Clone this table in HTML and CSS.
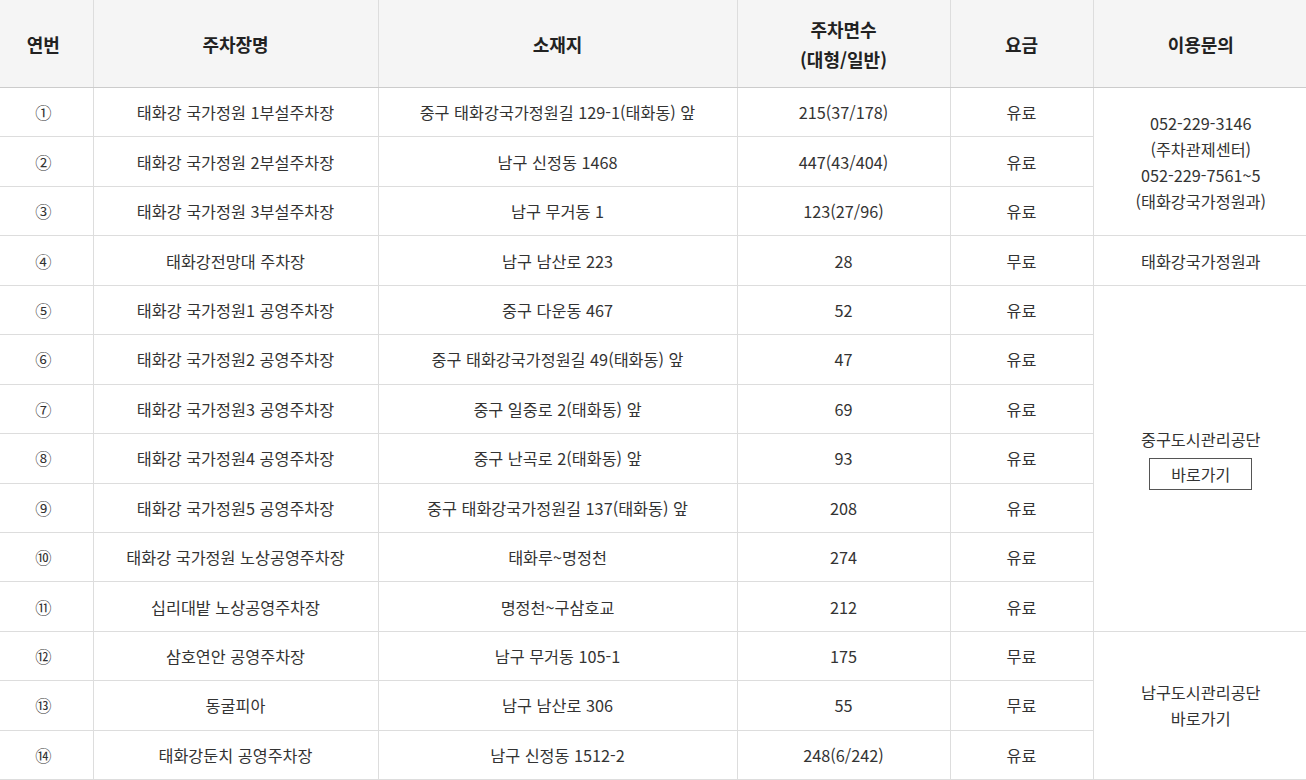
FILE: index.html
```html
<!DOCTYPE html>
<html lang="ko">
<head>
<meta charset="utf-8">
<title>태화강 국가정원 주차장</title>
<link rel="stylesheet" href="styles.css">
</head>
<body>
<div class="wrap">
<table class="park">
  <colgroup>
    <col class="c1"><col class="c2"><col class="c3"><col class="c4"><col class="c5"><col class="c6">
  </colgroup>
  <thead>
    <tr>
      <th>연번</th>
      <th>주차장명</th>
      <th>소재지</th>
      <th>주차면수<br>(대형/일반)</th>
      <th>요금</th>
      <th>이용문의</th>
    </tr>
  </thead>
  <tbody>
    <tr>
      <td>①</td><td>태화강 국가정원 1부설주차장</td><td>중구 태화강국가정원길 129-1(태화동) 앞</td><td>215(37/178)</td><td>유료</td>
      <td rowspan="3" class="info">052-229-3146<br>(주차관제센터)<br>052-229-7561~5<br>(태화강국가정원과)</td>
    </tr>
    <tr>
      <td>②</td><td>태화강 국가정원 2부설주차장</td><td>남구 신정동 1468</td><td>447(43/404)</td><td>유료</td>
    </tr>
    <tr>
      <td>③</td><td>태화강 국가정원 3부설주차장</td><td>남구 무거동 1</td><td>123(27/96)</td><td>유료</td>
    </tr>
    <tr>
      <td>④</td><td>태화강전망대 주차장</td><td>남구 남산로 223</td><td>28</td><td>무료</td>
      <td>태화강국가정원과</td>
    </tr>
    <tr>
      <td>⑤</td><td>태화강 국가정원1 공영주차장</td><td>중구 다운동 467</td><td>52</td><td>유료</td>
      <td rowspan="7" class="info">
        <div>중구도시관리공단</div>
        <a class="btn" href="#">바로가기</a>
      </td>
    </tr>
    <tr>
      <td>⑥</td><td>태화강 국가정원2 공영주차장</td><td>중구 태화강국가정원길 49(태화동) 앞</td><td>47</td><td>유료</td>
    </tr>
    <tr>
      <td>⑦</td><td>태화강 국가정원3 공영주차장</td><td>중구 일중로 2(태화동) 앞</td><td>69</td><td>유료</td>
    </tr>
    <tr>
      <td>⑧</td><td>태화강 국가정원4 공영주차장</td><td>중구 난곡로 2(태화동) 앞</td><td>93</td><td>유료</td>
    </tr>
    <tr>
      <td>⑨</td><td>태화강 국가정원5 공영주차장</td><td>중구 태화강국가정원길 137(태화동) 앞</td><td>208</td><td>유료</td>
    </tr>
    <tr>
      <td>⑩</td><td>태화강 국가정원 노상공영주차장</td><td>태화루~명정천</td><td>274</td><td>유료</td>
    </tr>
    <tr>
      <td>⑪</td><td>십리대밭 노상공영주차장</td><td>명정천~구삼호교</td><td>212</td><td>유료</td>
    </tr>
    <tr>
      <td>⑫</td><td>삼호연안 공영주차장</td><td>남구 무거동 105-1</td><td>175</td><td>무료</td>
      <td rowspan="3" class="info info-south">남구도시관리공단<br><a class="link" href="#">바로가기</a></td>
    </tr>
    <tr>
      <td>⑬</td><td>동굴피아</td><td>남구 남산로 306</td><td>55</td><td>무료</td>
    </tr>
    <tr>
      <td>⑭</td><td>태화강둔치 공영주차장</td><td>남구 신정동 1512-2</td><td>248(6/242)</td><td>유료</td>
    </tr>
  </tbody>
</table>
</div>
</body>
</html>
```

FILE: styles.css
```css
html, body {
  margin: 0;
  padding: 0;
  background: #fff;
}
body {
  font-family: "Noto Sans CJK KR", "Noto Sans", sans-serif;
  color: #333;
}
.wrap {
  width: 1306px;
  overflow: hidden;
}
.park {
  width: 1314px;
  margin-left: -6px;
  table-layout: fixed;
  border-collapse: collapse;
}
.c1 { width: 99px; }
.c2 { width: 285px; }
.c3 { width: 359px; }
.c4 { width: 213px; }
.c5 { width: 143px; }
.c6 { width: 215px; }

.park th,
.park td {
  border: 1px solid #dddddd;
  text-align: center;
  vertical-align: middle;
  padding: 0;
}
.park tr > :first-child { border-left: 0; }
.park tr > :last-child { border-right: 0; }
.park td.info { border-right: 0; }

.park thead th {
  height: 87px;
  background: #f5f5f5;
  font-size: 18px;
  font-weight: 700;
  line-height: 30px;
  color: #222;
  border-top: 0;
  border-bottom: 1px solid #cccccc;
}
.park tbody tr {
  height: 49.45px;
}
.park tbody td {
  font-size: 16.25px;
  line-height: 26px;
  color: #333;
}
.btn {
  display: inline-block;
  box-sizing: border-box;
  width: 103px;
  height: 32px;
  line-height: 30px;
  margin-top: 6px;
  border: 1px solid #555;
  color: #333;
  text-decoration: none;
  font-size: 16px;
}
.info-south {
  line-height: 27px;
}
.link {
  color: #333;
  text-decoration: none;
}
```
